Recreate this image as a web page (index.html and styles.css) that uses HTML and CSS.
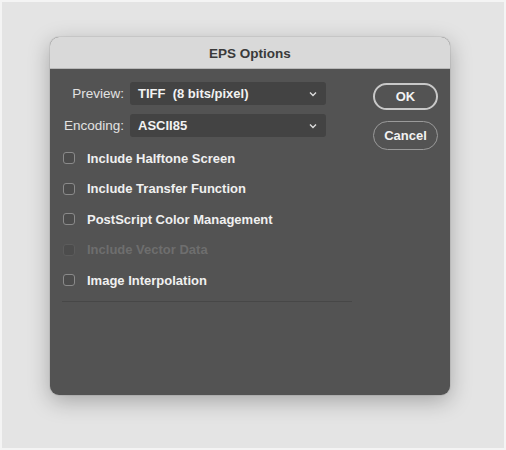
FILE: index.html
```html
<!DOCTYPE html>
<html lang="en">
<head>
    <meta charset="UTF-8">
    <title>EPS Options</title>
    <link rel="stylesheet" href="styles.css">
</head>
<body>
    <div class="dialog">
        <div class="titlebar">EPS Options</div>
        <div class="body">
            <div class="main">
                <div class="field">
                    <label class="lbl">Preview:</label>
                    <div class="select">TIFF&nbsp; (8 bits/pixel)
                        <svg class="chev" width="8" height="6" viewBox="0 0 8 6"><path d="M1 1.5 L4 4.5 L7 1.5" fill="none" stroke="#ddd" stroke-width="1.4"/></svg>
                    </div>
                </div>
                <div class="field">
                    <label class="lbl">Encoding:</label>
                    <div class="select">ASCII85
                        <svg class="chev" width="8" height="6" viewBox="0 0 8 6"><path d="M1 1.5 L4 4.5 L7 1.5" fill="none" stroke="#ddd" stroke-width="1.4"/></svg>
                    </div>
                </div>
                <div class="checks">
                    <div class="check"><span class="box"></span>Include Halftone Screen</div>
                    <div class="check"><span class="box"></span>Include Transfer Function</div>
                    <div class="check"><span class="box"></span>PostScript Color Management</div>
                    <div class="check disabled"><span class="box"></span>Include Vector Data</div>
                    <div class="check"><span class="box"></span>Image Interpolation</div>
                </div>
                <div class="sep"></div>
            </div>
            <div class="buttons">
                <div class="btn ok">OK</div>
                <div class="btn cancel">Cancel</div>
            </div>
        </div>
    </div>
</body>
</html>
```

FILE: styles.css
```css
* { margin: 0; padding: 0; box-sizing: border-box; }
html, body { height: 100%; }
body {
    background: #e4e4e4;
    font-family: "Helvetica Neue", "Liberation Sans", Arial, sans-serif;
    padding: 37px 56px 0 50px;
    border: 2px solid #f4f4f4;
}
.dialog {
    width: 400px;
    height: 358px;
    margin-top: -2px;
    margin-left: -2px;
    border-radius: 9px;
    overflow: hidden;
    background: #535353;
    box-shadow: 0 6px 22px rgba(0,0,0,0.28), 0 0 0 1px rgba(0,0,0,0.06);
}
.titlebar {
    height: 32px;
    background: #d9d9d9;
    border-bottom: 1px solid #b8b8b8;
    color: #3a3a3a;
    font-weight: bold;
    font-size: 13.5px;
    display: flex;
    align-items: center;
    justify-content: center;
    padding-top: 1px;
}
.body {
    display: flex;
    padding: 13px 12px 0 12px;
}
.main { width: 291px; }
.field {
    display: flex;
    align-items: center;
    margin-bottom: 9px;
}
.lbl {
    width: 68px;
    text-align: right;
    color: #e2e2e2;
    font-size: 13.5px;
    padding-right: 6px;
}
.select {
    width: 196px;
    height: 23px;
    background: #434343;
    border-radius: 3px;
    color: #f2f2f2;
    font-size: 13px;
    font-weight: bold;
    display: flex;
    align-items: center;
    padding-left: 8px;
    position: relative;
}
.chev { position: absolute; right: 9px; top: 9px; }
.checks { margin-top: -3px; }
.check {
    display: flex;
    align-items: center;
    height: 30.5px;
    color: #f0f0f0;
    font-size: 13px;
    font-weight: bold;
}
.box {
    width: 12px;
    height: 12px;
    border: 1px solid #8a8a8a;
    border-radius: 3px;
    background: #4c4c4c;
    margin-right: 12px;
    margin-left: 1px;
}
.disabled { color: #6e6e6e; }
.disabled .box { border-color: #5c5c5c; }
.sep {
    height: 1px;
    background: #474747;
    margin-top: 5px;
    width: 290px;
}
.buttons {
    margin-left: 21px;
    display: flex;
    flex-direction: column;
    gap: 11px;
}
.btn {
    width: 65px;
    height: 29px;
    border-radius: 14.5px;
    border: 1.5px solid #9a9a9a;
    color: #f2f2f2;
    font-size: 13px;
    font-weight: bold;
    display: flex;
    align-items: center;
    justify-content: center;
}
.btn.ok { border: 2px solid #c8c8c8; height: 27px; margin-top: 1px; }
```
